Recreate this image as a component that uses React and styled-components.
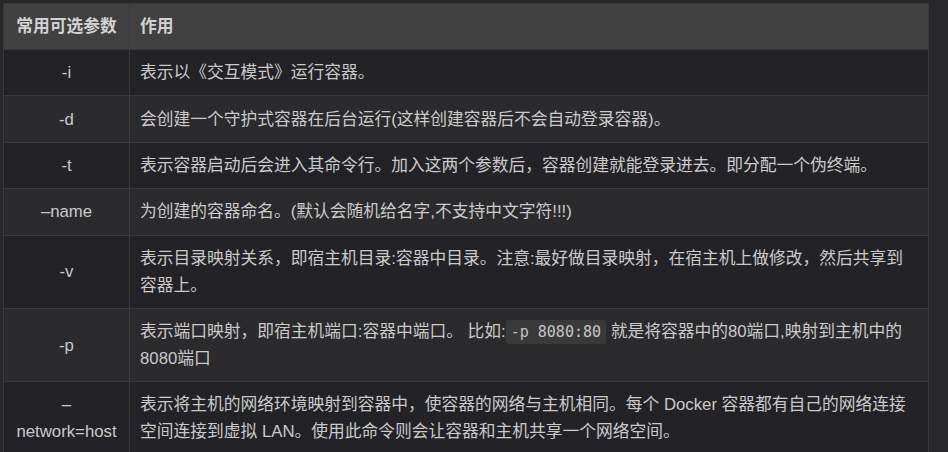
import React from 'react'
import styled, { createGlobalStyle } from 'styled-components'

const GlobalStyle = createGlobalStyle`
    html, body {
        margin: 0;
        padding: 0;
        background: #28282b;
    }
`

const Wrapper = styled.div`
    padding: 3px 19px 0 3px;
    font-family: 'Liberation Sans', 'Noto Sans CJK SC', sans-serif;
    font-size: 16.75px;
    color: #cacaca;
`

const Table = styled.table`
    width: 926px;
    border-collapse: collapse;
    table-layout: fixed;
`

const HeadCell = styled.th`
    background: #414141;
    color: #d2d2d2;
    font-weight: bold;
    line-height: 27px;
    padding: 9px 10px;
    border: 1px solid #3a3a3d;
    text-align: ${props => props.align || 'left'};
`

const Row = styled.tr`
    background: ${props => props.even ? '#2b2b2e' : '#232327'};
`

const Cell = styled.td`
    line-height: 27px;
    padding: 9.2px 10px;
    border: 1px solid #3a3a3d;
    text-align: ${props => props.align || 'left'};
    vertical-align: middle;
`

const Code = styled.code`
    font-family: 'DejaVu Sans Mono', 'Liberation Mono', monospace;
    font-size: 15px;
    line-height: 1;
    background: #3a3a3b;
    color: #c4c4c4;
    padding: 3px 5px;
    border-radius: 3px;
`

const rows = [
    { opt: '-i', desc: '表示以《交互模式》运行容器。' },
    { opt: '-d', desc: '会创建一个守护式容器在后台运行(这样创建容器后不会自动登录容器)。' },
    { opt: '-t', desc: '表示容器启动后会进入其命令行。加入这两个参数后，容器创建就能登录进去。即分配一个伪终端。' },
    { opt: '–name', desc: '为创建的容器命名。(默认会随机给名字,不支持中文字符!!!)' },
    { opt: '-v', desc: '表示目录映射关系，即宿主机目录:容器中目录。注意:最好做目录映射，在宿主机上做修改，然后共享到容器上。' },
    {
        opt: '-p',
        desc: <>表示端口映射，即宿主机端口:容器中端口。 比如:<Code>-p 8080:80</Code> 就是将容器中的80端口,映射到主机中的8080端口</>
    },
    { opt: '–network=host', desc: '表示将主机的网络环境映射到容器中，使容器的网络与主机相同。每个 Docker 容器都有自己的网络连接空间连接到虚拟 LAN。使用此命令则会让容器和主机共享一个网络空间。' },
]

export default function App() {
    return (
        <Wrapper>
            <GlobalStyle />
            <Table>
                <colgroup>
                    <col style={{ width: 126 }} />
                    <col />
                </colgroup>
                <thead>
                    <tr>
                        <HeadCell align='center'>常用可选参数</HeadCell>
                        <HeadCell>作用</HeadCell>
                    </tr>
                </thead>
                <tbody>
                    {rows.map((r, i) => (
                        <Row key={r.opt} even={i % 2 === 1}>
                            <Cell align='center'>{r.opt}</Cell>
                            <Cell>{r.desc}</Cell>
                        </Row>
                    ))}
                </tbody>
            </Table>
        </Wrapper>
    )
}
